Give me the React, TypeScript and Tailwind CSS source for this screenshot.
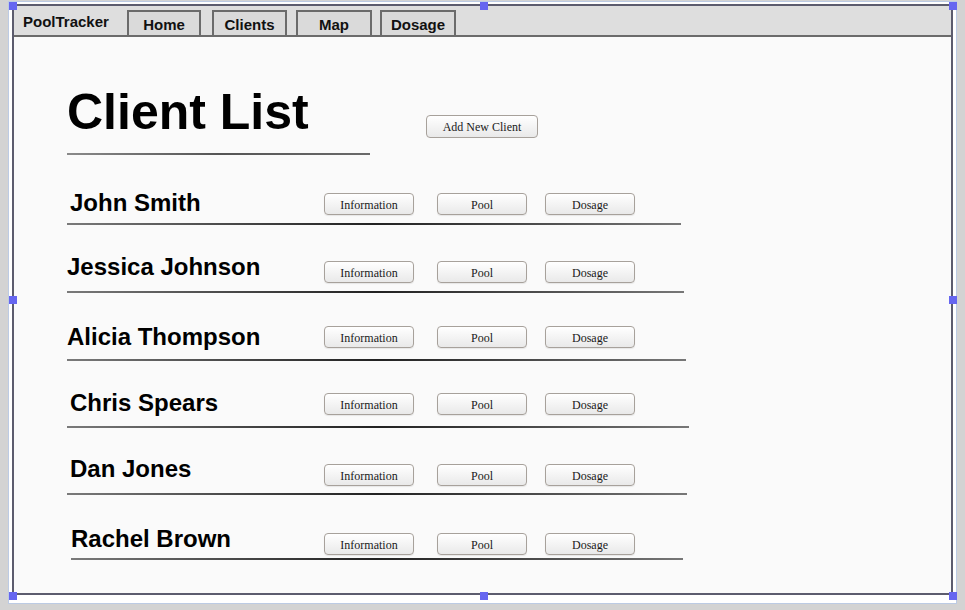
import React from 'react';

const clients = [
  { name: 'John Smith', rowMt: 'mt-[36px]', nameMl: 'pl-[3px]', btnMt: 'mt-[2px]', lineMt: 'mt-[8px]', line: 'ml-0 w-[614px]' },
  { name: 'Jessica Johnson', rowMt: 'mt-[30px]', nameMl: 'pl-0', btnMt: 'mt-[6px]', lineMt: 'mt-[8px]', line: 'ml-0 w-[617px]' },
  { name: 'Alicia Thompson', rowMt: 'mt-[32px]', nameMl: 'pl-0', btnMt: 'mt-[1px]', lineMt: 'mt-[10px]', line: 'ml-0 w-[619px]' },
  { name: 'Chris Spears', rowMt: 'mt-[30px]', nameMl: 'pl-[3px]', btnMt: 'mt-[2px]', lineMt: 'mt-[11px]', line: 'ml-0 w-[622px]' },
  { name: 'Dan Jones', rowMt: 'mt-[29px]', nameMl: 'pl-[3px]', btnMt: 'mt-[7px]', lineMt: 'mt-[7px]', line: 'ml-0 w-[620px]' },
  { name: 'Rachel Brown', rowMt: 'mt-[32px]', nameMl: 'pl-[4px]', btnMt: 'mt-[6px]', lineMt: 'mt-[3px]', line: 'ml-[4px] w-[612px]' },
];

function SmallButton({ label, className = '' }: { label: string; className?: string }) {
  return (
    <button
      className={
        'h-[22px] w-[90px] rounded-[4px] border border-[#a7a19b] bg-linear-to-b from-[#ffffff] to-[#e9e9e9] pt-[1px] text-[12px] leading-none text-[#1a1a1a] shadow-[0_1px_1px_rgba(0,0,0,0.08)] ' +
        className
      }
      style={{ fontFamily: '"Liberation Serif", "Times New Roman", serif' }}
    >
      {label}
    </button>
  );
}

function NavButton({ label, className = '' }: { label: string; className?: string }) {
  return (
    <button className={'h-[25px] border-2 border-b-0 border-[#6b6b6b] bg-[#dadada] pt-[2px] text-[15px] font-bold leading-none text-[#111] ' + className}>
      {label}
    </button>
  );
}

function Handle({ className }: { className: string }) {
  return <div className={'absolute h-[8px] w-[8px] bg-[#6666f0] ' + className} />;
}

export default function App() {
  return (
    <div
      className="h-[610px] w-[965px] overflow-hidden bg-[#d3d3d3] pl-[8px] pt-[1px]"
      style={{ fontFamily: '"Liberation Sans", Arial, sans-serif' }}
    >
      {/* white selection frame */}
      <div className="relative h-[603px] w-[949px] border border-[#bccbe4] bg-white pl-[3px] pt-[2px]">
        {/* wireframe panel */}
        <div className="h-[591px] w-[941px] border-2 border-[#5c5c6e] bg-[#fafafa]">
          {/* Nav bar */}
          <nav className="flex h-[31px] items-end border-b-2 border-[#6b6b6b] bg-[#dedede]">
            <span className="mb-[6px] ml-[9px] w-[104px] text-[15px] font-bold leading-none text-[#111]">PoolTracker</span>
            <NavButton label="Home" className="w-[74px]" />
            <NavButton label="Clients" className="ml-[11px] w-[75px]" />
            <NavButton label="Map" className="ml-[9px] w-[76px]" />
            <NavButton label="Dosage" className="ml-[8px] w-[76px]" />
          </nav>

          {/* Header */}
          <div className="ml-[53px] flex items-start pt-[50px]">
            <div className="w-[303px]">
              <h1 className="text-[50px] font-bold leading-none text-black">Client List</h1>
              <div className="mt-[16px] h-[2px] bg-linear-to-r from-[#8a8a8a] via-[#555] to-[#6a6a6a]" />
            </div>
            <button
              className="ml-[56px] mt-[28px] h-[23px] w-[112px] rounded-[4px] border border-[#a7a19b] bg-linear-to-b from-[#ffffff] to-[#e9e9e9] pt-[1px] text-[12px] leading-none text-[#1a1a1a]"
              style={{ fontFamily: '"Liberation Serif", "Times New Roman", serif' }}
            >
              Add New Client
            </button>
          </div>

          {/* Client rows */}
          <div className="ml-[53px]">
            {clients.map((c) => (
              <div key={c.name} className={c.rowMt}>
                <div className="flex items-start">
                  <div className={'w-[257px] ' + c.nameMl}>
                    <h2 className="text-[24px] font-bold leading-none text-black">{c.name}</h2>
                  </div>
                  <div className={'flex ' + c.btnMt}>
                    <SmallButton label="Information" />
                    <SmallButton label="Pool" className="ml-[23px]" />
                    <SmallButton label="Dosage" className="ml-[18px]" />
                  </div>
                </div>
                <div className={'h-[2px] bg-linear-to-r from-[#7a7a7a] via-[#222] to-[#777] ' + c.lineMt + ' ' + c.line} />
              </div>
            ))}
          </div>
        </div>

        {/* selection handles */}
        <Handle className="left-[0px] top-[0px]" />
        <Handle className="left-[471px] top-[0px]" />
        <Handle className="left-[940px] top-[0px]" />
        <Handle className="left-[0px] top-[294px]" />
        <Handle className="left-[940px] top-[294px]" />
        <Handle className="left-[0px] top-[590px]" />
        <Handle className="left-[471px] top-[590px]" />
        <Handle className="left-[940px] top-[590px]" />
      </div>
    </div>
  );
}
